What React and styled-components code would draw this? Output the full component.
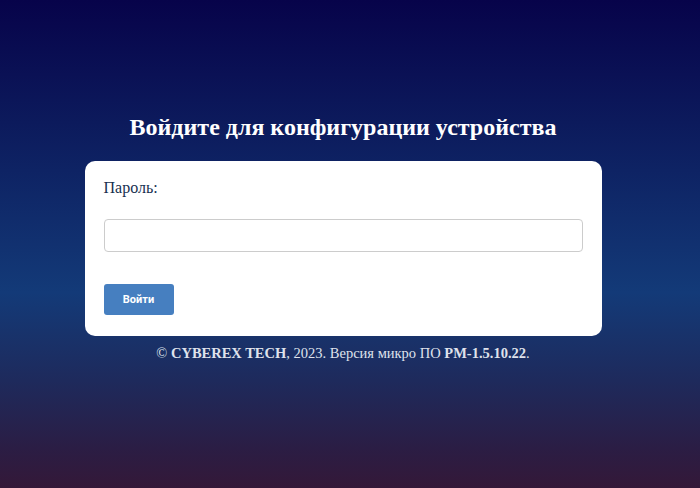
import React from "react";
import styled, { createGlobalStyle } from "styled-components";

const Global = createGlobalStyle`
  html, body { margin: 0; padding: 0; height: 100%; }
  body {
    font-family: "Liberation Serif", "Times New Roman", serif;
    background: linear-gradient(180deg, #07034a 0%, #0c1a5c 25%, #133a78 60%, #1e2a5c 78%, #2b1d44 92%, #341838 100%);
    min-height: 488px;
  }
  #root { min-height: 488px; }
`;

const Page = styled.main`
  min-height: 488px;
  box-sizing: border-box;
  padding: 112px 14px 0 0;
  display: flex;
  flex-direction: column;
  align-items: center;
`;

const Title = styled.h1`
  margin: 0 0 19px;
  font-family: "Liberation Serif", "Times New Roman", serif;
  font-weight: bold;
  font-size: 24px;
  line-height: 30px;
  color: #ffffff;
  text-align: center;
`;

const Card = styled.form`
  width: 517px;
  box-sizing: border-box;
  background: #ffffff;
  border-radius: 10px;
  padding: 16px 19px 21px;
  display: flex;
  flex-direction: column;
  align-items: flex-start;
`;

const Label = styled.label`
  font-size: 16px;
  line-height: 22px;
  color: #17304f;
  margin-bottom: 20px;
`;

const Input = styled.input`
  width: 479px;
  height: 33px;
  box-sizing: border-box;
  border: 1px solid #cccccc;
  border-radius: 4px;
  background: #fff;
  margin: 0 0 32px;
  padding: 0 8px;
  font-size: 14px;
`;

const Button = styled.button`
  width: 70px;
  height: 31px;
  border: none;
  border-radius: 3px;
  background: #467fc0;
  color: #ffffff;
  font-family: Roboto, "Liberation Sans", Arial, sans-serif;
  font-weight: 700;
  font-size: 11px;
  cursor: pointer;
`;

const Footer = styled.p`
  margin: 7px 0 0;
  font-size: 14.5px;
  line-height: 20px;
  color: #dfe2ec;
  text-align: center;
`;

export default function App() {
  return (
    <>
      <Global />
      <Page>
        <Title>Войдите для конфигурации устройства</Title>
        <Card onSubmit={(e) => e.preventDefault()}>
          <Label htmlFor="pw">Пароль:</Label>
          <Input id="pw" type="password" />
          <Button type="submit">Войти</Button>
        </Card>
        <Footer>
          © <b>CYBEREX TECH</b>, 2023. Версия микро ПО <b>PM-1.5.10.22</b>.
        </Footer>
      </Page>
    </>
  );
}
